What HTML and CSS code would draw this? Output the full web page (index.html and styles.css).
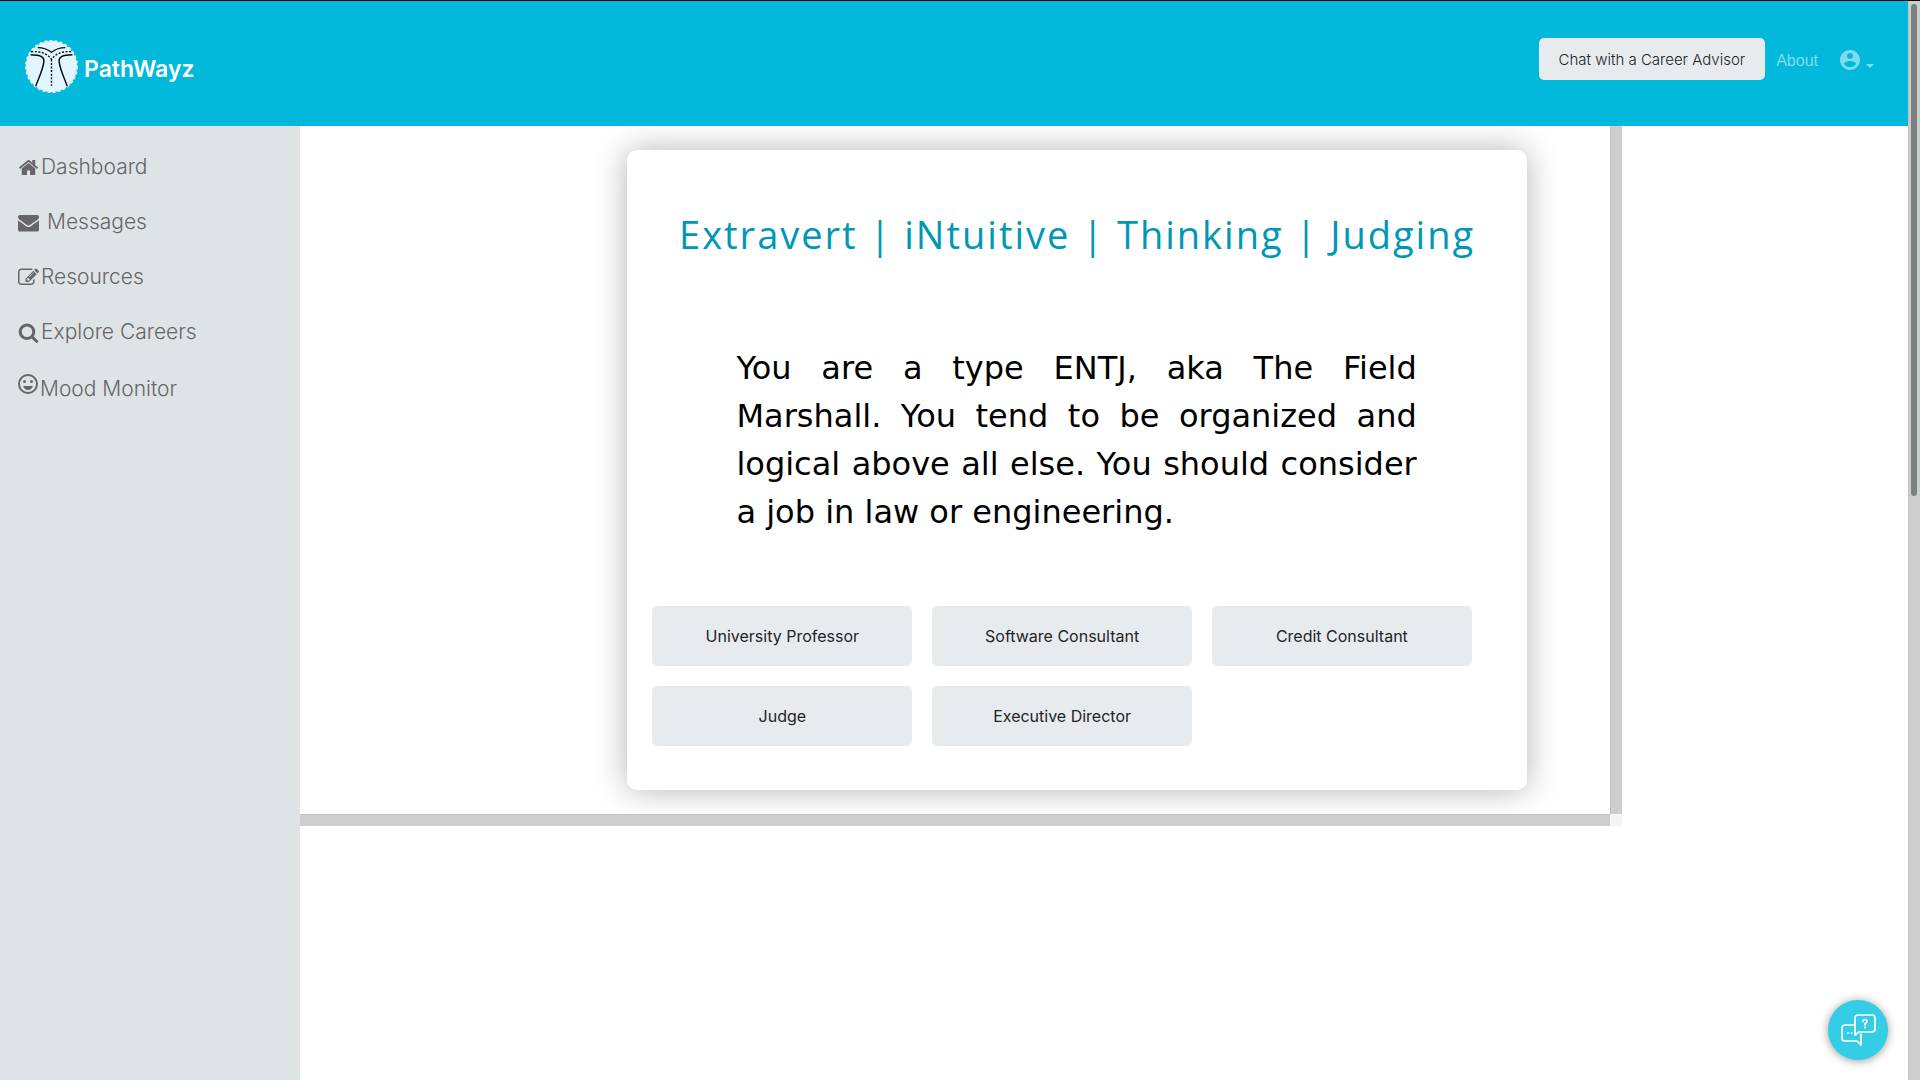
FILE: index.html
```html
<!DOCTYPE html>
<html lang="en">
<head>
  <meta charset="utf-8">
  <meta name="viewport" content="width=device-width, initial-scale=1">
  <title>PathWayz</title>
  <link rel="stylesheet" href="styles.css">
</head>
<body>
  <div class="app">
    <header class="topbar">
      <a class="brand" href="#">
        <svg class="brand-logo" viewBox="0 0 52 52" aria-hidden="true">
          <circle cx="26" cy="26" r="25" fill="#e1f5fe"/>
          <circle cx="26" cy="26" r="25" fill="none" stroke="#e1f5fe" stroke-width="2" stroke-dasharray="3 2"/>
          <g fill="none" stroke="#0b0b0b" stroke-width="1.400">
            <path d="M12.500 7.500Q20 7.500 26 12Q32 7.500 39.500 7.500"/>
            <path d="M6 11.500Q20 10.500 26 19Q32 10.500 46 11.500" stroke-dasharray="2 1.500"/>
            <path d="M26 19V45" stroke-dasharray="2 1.500"/>
            <path d="M5.500 14.500C16 14.500 19 17 18.500 21C18 28 14 36 10.500 45.500"/>
            <path d="M46.500 14.500C36 14.500 33 17 33.500 21C34 28 38 36 41.500 45.500"/>
          </g>
        </svg>
        <span class="brand-name">PathWayz</span>
      </a>
      <nav class="topnav" aria-label="Account">
        <button class="chat-button" type="button">Chat with a Career Advisor</button>
        <a class="top-link" href="#">About</a>
        <button class="account" type="button" aria-label="Account menu">
          <svg class="account-icon" viewBox="0 0 24 24" aria-hidden="true"><path fill="currentColor" d="M12 2C6.480 2 2 6.480 2 12s4.480 10 10 10 10-4.480 10-10S17.520 2 12 2zm0 3c1.660 0 3 1.340 3 3s-1.340 3-3 3-3-1.340-3-3 1.340-3 3-3zm0 14.200c-2.500 0-4.710-1.280-6-3.220.030-1.990 4-3.080 6-3.080 1.990 0 5.970 1.090 6 3.080-1.290 1.940-3.500 3.220-6 3.220z"/></svg>
          <span class="caret"></span>
        </button>
      </nav>
    </header>
    <div class="body">
      <nav class="sidebar" aria-label="Main">
        <a class="side-link" href="#"><svg class="side-icon" viewBox="0 0 1792 1792" aria-hidden="true"><path fill="currentColor" d="M1472 992v480q0 26-19 45t-45 19h-384v-384h-256v384h-384q-26 0-45-19t-19-45v-480q0-1 .5-3t.5-3l575-474 575 474q1 2 1 6zm223-69l-62 74q-8 9-21 11h-3q-13 0-21-7l-692-577-692 577q-12 8-24 7-13-2-21-11l-62-74q-8-10-7-23.500t11-21.500l719-599q32-26 76-26t76 26l244 204v-195q0-14 9-23t23-9h192q14 0 23 9t9 23v408l219 182q10 8 11 21.500t-7 23.500z"/></svg>Dashboard</a>
        <a class="side-link side-link-spaced" href="#"><svg class="side-icon" viewBox="0 0 1792 1792" aria-hidden="true"><path fill="currentColor" d="M1792 710v794q0 66-47 113t-113 47h-1472q-66 0-113-47t-47-113v-794q44 49 101 87 362 246 497 345 57 42 92.500 65.500t94.500 48 110 24.500h2q51 0 110-24.500t94.500-48 92.500-65.500q170-123 498-345 57-39 100-87zm0-294q0 79-49 151t-122 123q-376 261-468 325-10 7-42.500 31t-54 38.500-52 32.500-57.500 27-50 9h-2q-23 0-50-9t-57.500-27-52-32.500-54-38.500-42.500-31q-91-64-262-182.500t-205-142.500q-62-42-117-115.500t-55-136.500q0-78 41.500-130t118.500-52h1472q65 0 112.500 47t47.500 113z"/></svg>Messages</a>
        <a class="side-link" href="#"><svg class="side-icon" viewBox="0 0 1792 1792" aria-hidden="true"><path fill="currentColor" d="M888 1184l116-116-152-152-116 116v56h96v96h56zm440-720q-16-16-33 1l-350 350q-17 17-1 33t33-1l350-350q17-17 1-33zm80 594v190q0 119-84.500 203.500t-203.500 84.500h-832q-119 0-203.500-84.500t-84.500-203.500v-832q0-119 84.500-203.500t203.500-84.500h832q63 0 117 25 15 7 18 23 3 17-9 29l-49 49q-14 14-32 8-23-6-45-6h-832q-66 0-113 47t-47 113v832q0 66 47 113t113 47h832q66 0 113-47t47-113v-126q0-13 9-22l64-64q15-15 35-7t20 29zm-96-738l288 288-672 672h-288v-288zm444 132l-92 92-288-288 92-92q28-28 68-28t68 28l152 152q28 28 28 68t-28 68z"/></svg>Resources</a>
        <a class="side-link" href="#"><svg class="side-icon" viewBox="0 0 1792 1792" aria-hidden="true"><path fill="currentColor" d="M1216 832q0-185-131.500-316.500t-316.500-131.500-316.500 131.500-131.500 316.500 131.500 316.500 316.500 131.500 316.500-131.500 131.500-316.500zm512 832q0 52-38 90t-90 38q-54 0-90-38l-343-342q-179 124-399 124-143 0-273.500-55.500t-225-150-150-225-55.500-273.500 55.500-273.500 150-225 225-150 273.500-55.500 273.500 55.500 225 150 150 225 55.500 273.500q0 220-124 399l343 343q37 37 37 90z"/></svg>Explore Careers</a>
        <a class="side-link side-link-mood" href="#"><svg class="mood-icon" viewBox="0 0 24 24" aria-hidden="true"><circle cx="12" cy="12" r="9" fill="none" stroke="currentColor" stroke-width="2"/><circle cx="8.500" cy="9.500" r="1.500" fill="currentColor"/><circle cx="15.500" cy="9.500" r="1.500" fill="currentColor"/><path fill="currentColor" d="M12 18c2.280 0 4.220-1.660 5-4H7c.78 2.340 2.720 4 5 4z"/></svg>Mood Monitor</a>
      </nav>
      <main class="main">
        <section class="panel">
          <div class="panel-view">
            <article class="card">
              <h1 class="card-title">Extravert | iNtuitive | Thinking | Judging</h1>
              <p class="card-text">You are a type ENTJ, aka The Field Marshall. You tend to be organized and logical above all else. You should consider a job in law or engineering.</p>
              <div class="careers">
                <button class="career" type="button">University Professor</button>
                <button class="career" type="button">Software Consultant</button>
                <button class="career" type="button">Credit Consultant</button>
                <button class="career" type="button">Judge</button>
                <button class="career" type="button">Executive Director</button>
              </div>
            </article>
          </div>
          <div class="track track-v"></div>
          <div class="track track-h"></div>
          <div class="track-corner"></div>
        </section>
      </main>
    </div>
  </div>
  <div class="page-scroll"><div class="page-thumb"></div></div>
  <button class="help" type="button" aria-label="Open help chat">
    <svg class="help-icon" viewBox="0 0 36 36" aria-hidden="true">
      <g fill="none" stroke="#fff" stroke-width="1.700" stroke-linejoin="round" stroke-linecap="round">
        <path d="M14 13H5Q2 13 2 16V26Q2 29 5 29H17L21 33V22"/>
        <path d="M18 3H32Q35 3 35 6V17Q35 20 32 20H19L15 23V6Q15 3 18 3Z"/>
        <path d="M23 9.500Q23 7.500 25 7.500Q27 7.500 27 9.500Q27 11 25 11.500V13"/>
      </g>
      <g fill="#fff"><circle cx="25" cy="15.500" r="1"/><circle cx="8" cy="21" r="1"/><circle cx="11.500" cy="21" r="1"/></g>
    </svg>
  </button>
</body>
</html>
```
FILE: styles.css
```css
*, *::before, *::after { box-sizing: border-box; }

body {
  margin: 0;
  min-height: 100vh;
  display: grid;
  grid-template-columns: minmax(0, 1fr) 12px;
  border-top: 1px solid #000;
  background: #fff;
  font-family: Inter, sans-serif;
}

button { border: 0; font-family: inherit; cursor: pointer; }
a { text-decoration: none; }

.app { display: flex; flex-direction: column; }

/* Top bar */
.topbar {
  display: flex;
  justify-content: space-between;
  align-items: flex-start;
  height: 125px;
  padding: 37px 34px 0 25px;
  background: #02b8db;
}

.brand {
  display: flex;
  align-items: center;
  gap: 6px;
  margin-top: 2px;
  color: #fff;
  font-size: 23px;
  font-weight: 600;
}
.brand-logo { width: 53px; height: 53px; }
.brand-name { padding-top: 4px; }

.topnav { display: flex; align-items: center; }
.chat-button {
  height: 42px;
  padding: 0 20px;
  border-radius: 5px;
  background: #e8ebee;
  color: #212529;
  font-size: 15px;
  font-weight: 300;
}
.top-link {
  margin-left: 11px;
  padding-top: 3px;
  color: #80dced;
  font: 16px/24px "Liberation Sans", Arial, sans-serif;
}
.account {
  display: flex;
  align-items: center;
  gap: 4px;
  margin-left: 20px;
  padding: 2px 0 0;
  background: none;
  color: #80dced;
}
.account-icon { width: 24px; height: 24px; }
.caret {
  margin-top: 12px;
  border: 4px solid transparent;
  border-top-color: currentColor;
  border-bottom: 0;
}

/* Sidebar */
.body { display: flex; flex: 1; }
.sidebar {
  display: flex;
  flex-direction: column;
  gap: 25px;
  width: 300px;
  padding: 26px 18px;
  background: #dee4e6;
}
.side-link {
  display: flex;
  align-items: center;
  gap: 2px;
  color: #666;
  font-size: 21px;
  font-weight: 300;
  line-height: 30px;
}
.side-link-spaced { gap: 8px; }
.side-link-mood { align-items: baseline; gap: 0; margin-left: -2px; }
.side-icon { width: 21px; height: 21px; }
.mood-icon { width: 24px; height: 24px; }

/* Result panel */
.main { flex: 1; min-width: 0; }
.panel {
  display: grid;
  grid-template-columns: minmax(0, 1fr) 12px;
  grid-template-rows: auto 12px;
  width: 82.2%;
}
.panel-view { padding: 24px 83px 24px 25%; overflow: hidden; }
.track { background: #cdcdcd; }
.track-v { border-left: 1px solid #c8c1ba; }
.track-h { border-top: 1px solid #c8c1ba; }
.track-corner { background: #f5f4f2; }

.card {
  min-height: 640px;
  padding: 54px 25px 44px;
  border-radius: 10px;
  background: #fff;
  box-shadow: 0 0 32px rgba(0, 0, 0, 0.3);
}
.card-title {
  margin: 0;
  color: #0097b5;
  font: 500 38px/60px "Open Sans", sans-serif;
  letter-spacing: 2px;
  text-align: center;
  white-space: nowrap;
}
.card-text {
  margin: 80px 85px 70px 84px;
  color: #000;
  font: 32px/48px "DejaVu Sans", sans-serif;
  text-align: justify;
}
.careers {
  display: grid;
  grid-template-columns: repeat(3, 1fr);
  gap: 20px;
  padding-right: 30px;
}
.career {
  height: 60px;
  border-radius: 5px;
  background: #e8ebee;
  color: #212529;
  font-size: 16px;
}

/* Page scroll track */
.page-scroll { padding: 3px 3px 0 2px; border-left: 1px solid #c8c1ba; background: #cdcdcd; }
.page-thumb { height: 492px; border-radius: 3px; background: #7b8080; }

/* Floating help */
.help {
  position: fixed;
  right: 32px;
  bottom: 20px;
  display: grid;
  place-items: center;
  width: 60px;
  height: 60px;
  padding: 0;
  border-radius: 50%;
  background: #35cce6;
  box-shadow: 0 1px 10px rgba(0, 0, 0, 0.4);
}
.help-icon { width: 36px; height: 36px; }
```
